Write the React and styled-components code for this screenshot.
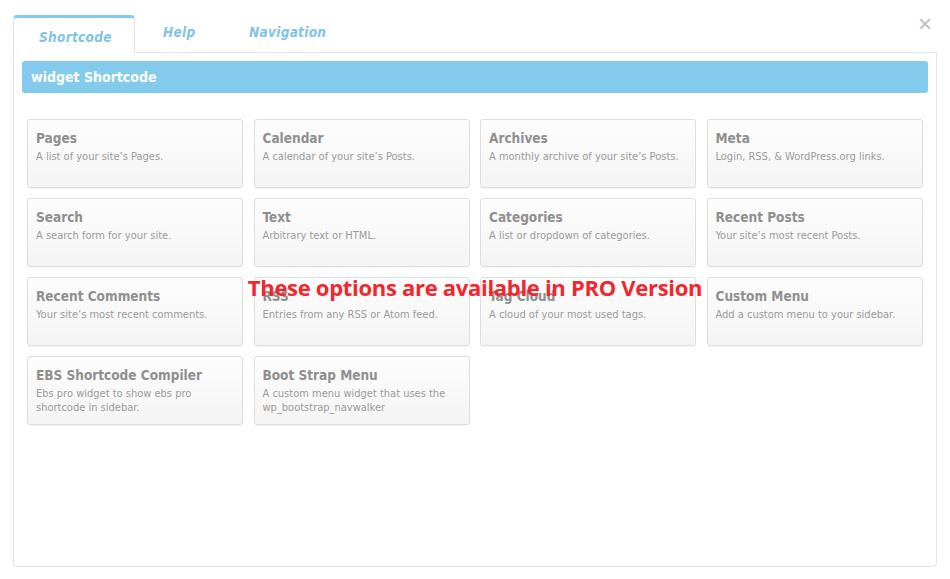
import React from "react";
import styled, { createGlobalStyle } from "styled-components";

const GlobalStyle = createGlobalStyle`
  html, body { margin: 0; padding: 0; background: #fff; }
  body { font-family: "DejaVu Sans Condensed", "DejaVu Sans", sans-serif; }
`;

const Page = styled.div`
  position: relative;
  width: 950px;
  height: 579px;
  padding: 14px 13px 0 13px;
  box-sizing: border-box;
`;

const Close = styled.button`
  position: absolute;
  top: 13px;
  right: 18px;
  background: none;
  border: none;
  color: #bdbdbd;
  font-family: "Liberation Sans", sans-serif;
  font-size: 24px;
  line-height: 22px;
  padding: 0;
  cursor: pointer;
`;

const TabBar = styled.div`
  display: flex;
  align-items: flex-end;
  height: 38px;
`;

const Tab = styled.div`
  box-sizing: border-box;
  height: ${p => (p.active ? "38px" : "36px")};
  width: ${p => p.w}px;
  padding-left: ${p => p.pad}px;
  display: flex;
  align-items: center;
  font-family: "DejaVu Sans Condensed", "DejaVu Sans", sans-serif;
  font-stretch: condensed;
  font-size: 13.5px;
  font-weight: bold;
  font-style: italic;
  color: #7fc4e6;
  letter-spacing: 0.3px;
  background: #fff;
  border: ${p => (p.active ? "1px solid #e3e3e3" : "none")};
  border-top: ${p => (p.active ? "3px solid #82cbec" : "none")};
  border-bottom: none;
  border-radius: 4px 4px 0 0;
  margin-bottom: ${p => (p.active ? "-1px" : "2px")};
  position: relative;
  z-index: 1;
  padding-top: ${p => (p.active ? "2px" : "0")};
`;

const Panel = styled.div`
  box-sizing: border-box;
  height: 515px;
  border: 1px solid #e5e5e5;
  border-radius: 0 0 4px 4px;
  padding: 8px 8px 0 8px;
`;

const HeaderBar = styled.div`
  height: 32px;
  background: #82cbec;
  border-radius: 3px;
  color: #fff;
  font-family: "DejaVu Sans Condensed", "DejaVu Sans", sans-serif;
  font-stretch: condensed;
  font-weight: bold;
  font-size: 14px;
  display: flex;
  align-items: center;
  padding-left: 9px;
`;

const GridWrap = styled.div`
  position: relative;
  padding: 26px 5px 0 5px;
`;

const Grid = styled.div`
  display: grid;
  grid-template-columns: repeat(4, 216px);
  grid-auto-rows: 69px;
  column-gap: 10.5px;
  row-gap: 10px;
`;

const Card = styled.div`
  box-sizing: border-box;
  border: 1px solid #dedede;
  border-radius: 3px;
  background: linear-gradient(#fdfdfd, #f4f4f4);
  box-shadow: 0 1px 1px rgba(0, 0, 0, 0.04);
  padding: 9px 8px 0 8px;
`;

const CardTitle = styled.div`
  font-family: "DejaVu Sans Condensed", "DejaVu Sans", sans-serif;
  font-stretch: condensed;
  font-weight: bold;
  font-size: 13.5px;
  color: #8f8f8f;
  line-height: 19px;
`;

const CardDesc = styled.div`
  font-family: "DejaVu Sans Condensed", "DejaVu Sans", sans-serif;
  font-stretch: condensed;
  font-size: 11px;
  color: #9b9b9b;
  line-height: 14px;
  margin-top: 2px;
`;

const ProNotice = styled.div`
  position: absolute;
  left: 0;
  right: 0;
  top: 179px;
  text-align: center;
  font-family: "Open Sans", "Lato", sans-serif;
  font-stretch: normal;
  font-weight: bold;
  font-size: 22px;
  letter-spacing: -0.3px;
  color: #f2262c;
  pointer-events: none;
`;

const widgets = [
  ["Pages", "A list of your site’s Pages."],
  ["Calendar", "A calendar of your site’s Posts."],
  ["Archives", "A monthly archive of your site’s Posts."],
  ["Meta", "Login, RSS, & WordPress.org links."],
  ["Search", "A search form for your site."],
  ["Text", "Arbitrary text or HTML."],
  ["Categories", "A list or dropdown of categories."],
  ["Recent Posts", "Your site’s most recent Posts."],
  ["Recent Comments", "Your site’s most recent comments."],
  ["RSS", "Entries from any RSS or Atom feed."],
  ["Tag Cloud", "A cloud of your most used tags."],
  ["Custom Menu", "Add a custom menu to your sidebar."],
  ["EBS Shortcode Compiler", "Ebs pro widget to show ebs pro shortcode in sidebar."],
  ["Boot Strap Menu", "A custom menu widget that uses the wp_bootstrap_navwalker"],
];

export default function App() {
  return (
    <Page>
      <GlobalStyle />
      <Close aria-label="close">×</Close>
      <TabBar>
        <Tab active w={122} pad={25}>Shortcode</Tab>
        <Tab w={86} pad={28}>Help</Tab>
        <Tab w={120} pad={28}>Navigation</Tab>
      </TabBar>
      <Panel>
        <HeaderBar>widget Shortcode</HeaderBar>
        <GridWrap>
          <Grid>
            {widgets.map(([title, desc]) => (
              <Card key={title}>
                <CardTitle>{title}</CardTitle>
                <CardDesc>{desc}</CardDesc>
              </Card>
            ))}
          </Grid>
          <ProNotice>These options are available in PRO Version</ProNotice>
        </GridWrap>
      </Panel>
    </Page>
  );
}
